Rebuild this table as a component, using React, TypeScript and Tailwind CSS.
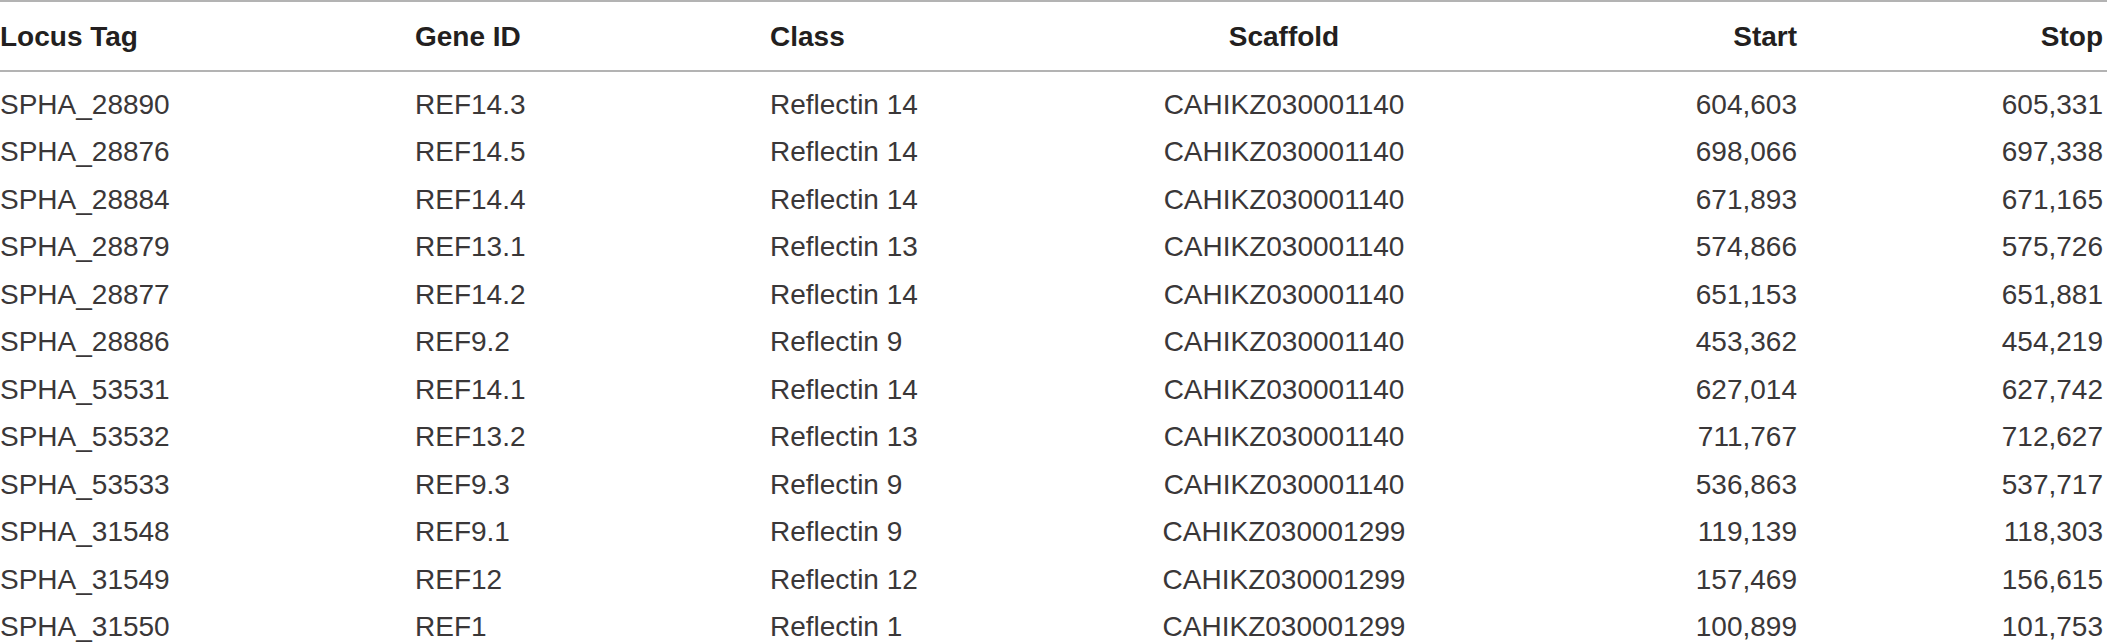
import React from 'react';

const ROWS: string[][] = [
  ['SPHA_28890', 'REF14.3', 'Reflectin 14', 'CAHIKZ030001140', '604,603', '605,331'],
  ['SPHA_28876', 'REF14.5', 'Reflectin 14', 'CAHIKZ030001140', '698,066', '697,338'],
  ['SPHA_28884', 'REF14.4', 'Reflectin 14', 'CAHIKZ030001140', '671,893', '671,165'],
  ['SPHA_28879', 'REF13.1', 'Reflectin 13', 'CAHIKZ030001140', '574,866', '575,726'],
  ['SPHA_28877', 'REF14.2', 'Reflectin 14', 'CAHIKZ030001140', '651,153', '651,881'],
  ['SPHA_28886', 'REF9.2', 'Reflectin 9', 'CAHIKZ030001140', '453,362', '454,219'],
  ['SPHA_53531', 'REF14.1', 'Reflectin 14', 'CAHIKZ030001140', '627,014', '627,742'],
  ['SPHA_53532', 'REF13.2', 'Reflectin 13', 'CAHIKZ030001140', '711,767', '712,627'],
  ['SPHA_53533', 'REF9.3', 'Reflectin 9', 'CAHIKZ030001140', '536,863', '537,717'],
  ['SPHA_31548', 'REF9.1', 'Reflectin 9', 'CAHIKZ030001299', '119,139', '118,303'],
  ['SPHA_31549', 'REF12', 'Reflectin 12', 'CAHIKZ030001299', '157,469', '156,615'],
  ['SPHA_31550', 'REF1', 'Reflectin 1', 'CAHIKZ030001299', '100,899', '101,753'],
];

const HEADERS = ['Locus Tag', 'Gene ID', 'Class', 'Scaffold', 'Start', 'Stop'];

// column alignment, matching the grid template below
const ALIGN = ['text-left', 'text-left', 'text-left', 'text-center', 'text-right', 'text-right'];

const GRID = 'grid grid-cols-[415px_355px_330px_368px_329px_306px]';

export default function App() {
  return (
    <div className="w-[2107px] h-[642px] overflow-hidden bg-white font-['Liberation_Sans',Arial,sans-serif] text-[28px]">
      <div className="border-t-2 border-[#b3b3b3]">
        <div className={`${GRID} h-[70px] items-center border-b-2 border-[#b3b3b3] font-bold text-[#231f20]`}>
          {HEADERS.map((h, i) => (
            <div key={h} className={`${ALIGN[i]} leading-none pt-[1px]`}>{h}</div>
          ))}
        </div>
        <div className="pt-[9px]">
          {ROWS.map((row) => (
            <div key={row[0]} className={`${GRID} h-[47.5px] items-center text-[#3a3738]`}>
              {row.map((cell, i) => (
                <div key={i} className={`${ALIGN[i]} leading-none`}>{cell}</div>
              ))}
            </div>
          ))}
        </div>
      </div>
    </div>
  );
}
